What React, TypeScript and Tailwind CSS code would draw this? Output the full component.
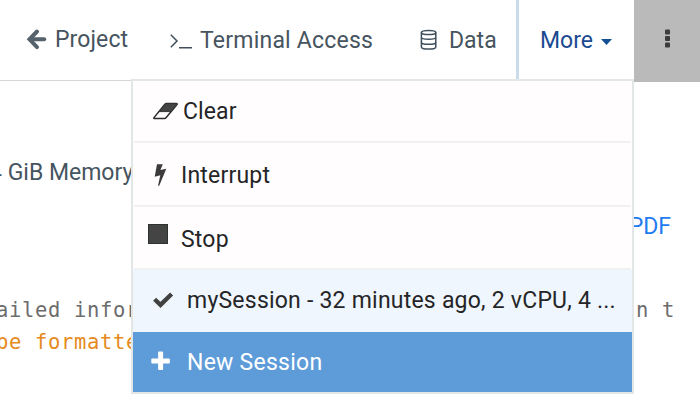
import React from 'react';

const label = 'whitespace-pre leading-8';

function Header() {
  return (
    <header className="flex h-[82px] text-[23px] text-[#465460]">
      <nav className="flex h-[81px] w-[516px] border-b border-[#d4d6d9]">
        <a className="flex h-8 w-[169px] mt-[24px] pl-[26px]">
          <svg className="mt-[4px] h-[22px] w-[22px]" viewBox="26 28 22 22" fill="none" stroke="#56626b" strokeWidth="4" strokeLinecap="round">
            <path d="M37 31.5 29.5 39.3 37 47.1" strokeLinejoin="miter" />
            <path d="M31 39.3H44.2" />
          </svg>
          <span className={label + ' ml-[7px] tracking-[0.1px]'}>Project</span>
        </a>
        <a className="mt-[25px] flex h-8 w-[250px]">
          <svg className="mt-[7px] h-[20px] w-[24px]" viewBox="169 32 24 20" fill="none" stroke="#3f4e5a" strokeWidth="1.5">
            <path d="M170.8 34.8 177 41 170.8 47.2M179 47.8H192" />
          </svg>
          <span className={label + ' ml-[7px] tracking-[0.22px]'}>Terminal Access</span>
        </a>
        <a className="mt-[25px] flex h-8">
          <svg className="mt-[3px] h-[24px] w-[20px]" viewBox="419 28 20 24" fill="none" stroke="#3f4e5a" strokeWidth="1.5">
            <ellipse cx="428.6" cy="32.5" rx="7.2" ry="2.1" />
            <path d="M421.4 32.5V47C421.4 49.8 435.8 49.8 435.8 47V32.5M421.4 37.3C421.4 40 435.8 40 435.8 37.3M421.4 42.2C421.4 45 435.8 45 435.8 42.2" />
          </svg>
          <span className={label + ' ml-[10px]'}>Data</span>
        </a>
      </nav>
      <div className="flex h-[81px] w-[118px] border-l-3 border-[#c9dcec] pl-[21px] text-[#1b4a91]">
        <span className={label + ' mt-[25px]'}>More</span>
        <svg className="mt-[39px] ml-[8px] h-[6px] w-[11px]" viewBox="0 0 11 6" fill="#134f94"><path d="M0 0H11L5.5 6Z" /></svg>
      </div>
      <div className="h-[82px] w-[66px] bg-[#bababa]">
        <svg className="mt-[29px] ml-[31px] h-[20px] w-[5px]" viewBox="0 0 5 20" fill="#3c3c3c">
          <rect y="0.5" width="5" height="5" rx="1" /><rect y="7" width="5" height="5" rx="1" /><rect y="13.6" width="5" height="5" rx="1" />
        </svg>
      </div>
    </header>
  );
}

function Menu() {
  return (
    <div className="absolute top-[79px] left-[131px] flex h-[315px] w-[503px] flex-col border-2 border-[#e3e6e7] bg-[#fffdfe] text-[23px] text-[#252527]">
      <div className="mx-px flex h-[62px] border-b-2 border-[#f0f1f1]">
        <svg className="mt-[21px] ml-[18px] h-[18px] w-[28px]" viewBox="152 102 28 18">
          <path d="M154 117.6Q153.4 118.4 154.6 118.4H164.6Q165.4 118.4 166 117.7L176.8 104.7Q177.6 103.6 176.4 103.6H166.4Q165.5 103.6 164.9 104.3Z" fill="#fffdfe" stroke="#2c2c2c" strokeWidth="1.5" />
          <path d="M159.2 111.6H171.1L176.8 104.7Q177.6 103.6 176.4 103.6H166.4Q165.5 103.6 164.9 104.3Z" fill="#444" stroke="#333" />
        </svg>
        <span className={label + ' mt-[15px] ml-[3px] tracking-[0.1px]'}>Clear</span>
      </div>
      <div className="mx-px flex h-[64px] border-b-2 border-[#f0f1f1]">
        <svg className="mt-[20px] ml-[20px] h-[24px] w-[14px]" viewBox="154 163 14 24" fill="#3b3b3b">
          <path d="M157 164.2H162.8L160.4 170.1L166.3 168.8L159.2 185.7H158L160.3 175.2L154.7 176.7Z" />
        </svg>
        <span className={label + ' mt-[17px] ml-[13px] tracking-[0.2px]'}>Interrupt</span>
      </div>
      <div className="mx-px flex h-[63px] border-b-2 border-[#f0f1f1]">
        <div className="mt-[17px] ml-[14px] h-[20px] w-[20px] border border-[#2c322c] bg-[#444]" />
        <span className={label + ' mt-[17px] ml-[13px] tracking-[0.2px]'}>Stop</span>
      </div>
      <div className="flex h-[62px] bg-[#eff6fd]">
        <svg className="mt-[21px] ml-[20px] h-[18px] w-[22px]" viewBox="153 291 22 18" fill="none" stroke="#414141" strokeWidth="4.3">
          <path d="M154.6 299.2 160.5 304.9 171.6 294" />
        </svg>
        <span className={label + ' mt-[15px] ml-[12px] tracking-[0.22px]'}>mySession - 32 minutes ago, 2 vCPU, 4 ...</span>
      </div>
      <div className="flex flex-1 bg-[#5e9cd9] text-white">
        <svg className="mt-[19px] ml-[18px] h-[20px] w-[20px]" viewBox="0 0 20 20" fill="white">
          <rect x="0.3" y="7.4" width="18.6" height="5" rx="1" /><rect x="7.1" y="0.5" width="5" height="18.6" rx="1" />
        </svg>
        <span className={label + ' mt-[15px] ml-[16px] tracking-[0.25px]'}>New Session</span>
      </div>
    </div>
  );
}

export default function App() {
  return (
    <div className="relative h-[416px] w-[700px] overflow-hidden bg-white font-[Roboto,sans-serif] font-normal">
      <Header />
      <main>
        <p className="mt-[75px] -ml-[11px] whitespace-pre text-[23px] leading-8 text-[#465460]">4 GiB Memory</p>
        <p className="mt-[22px] pr-[29px] text-right text-[23px] leading-8 text-[#1f7cf0]">PDF</p>
        <div className="mt-[51px] -ml-[4px] font-['DejaVu_Sans_Mono',monospace] text-[20.5px] leading-[32px] tracking-[0.65px] whitespace-pre">
          <div className="flex w-[679px] justify-between text-[#6c6c6c]"><span>ailed infor</span><span>n t</span></div>
          <div className="text-[#e58a20]">be formatted</div>
        </div>
      </main>
      <Menu />
    </div>
  );
}
